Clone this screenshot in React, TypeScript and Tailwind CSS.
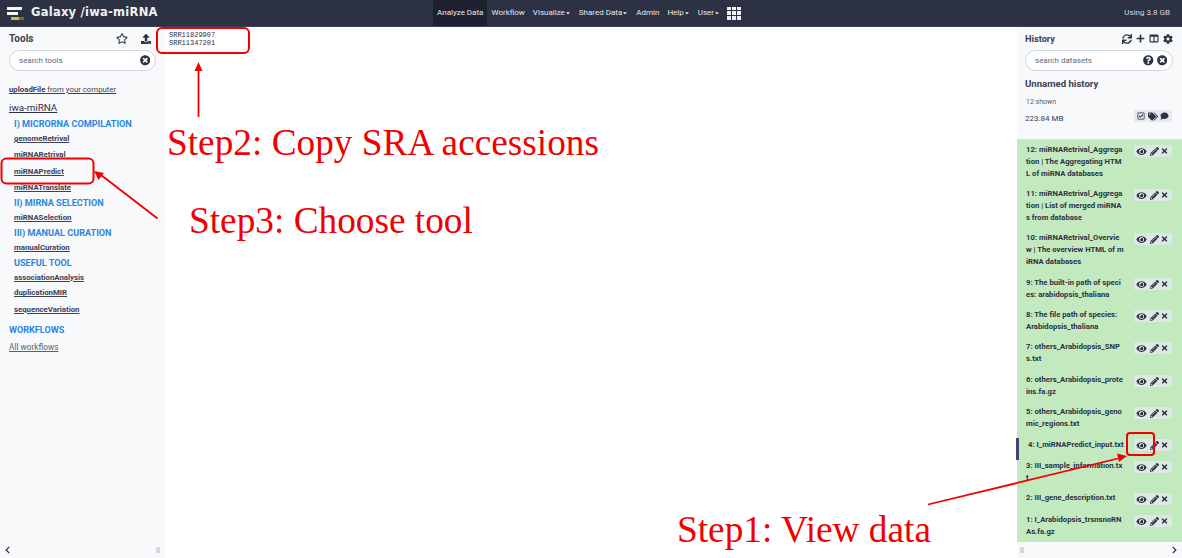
import React from "react";
import {
  FaEye, FaPencilAlt, FaTimes, FaSync, FaPlus, FaColumns, FaCog, FaRegStar, FaUpload,
  FaTimesCircle, FaQuestionCircle, FaRegCheckSquare, FaTags, FaComment, FaChevronLeft, FaChevronRight, FaCaretDown,
} from "react-icons/fa";

const nav = [
  { t: "Analyze Data", active: true },
  { t: "Workflow" },
  { t: "Visualize", c: true },
  { t: "Shared Data", c: true },
  { t: "Admin" },
  { t: "Help", c: true },
  { t: "User", c: true },
];

const tools = [
  { t: "genomeRetrival", c: "h-[16px]", kind: "tool" },
  { t: "miRNARetrival", c: "h-[16px]", kind: "tool" },
  { t: "miRNAPredict", c: "h-[17px]", kind: "tool" },
  { t: "miRNATranslate", c: "h-[15px]", kind: "tool" },
  { t: "II) MIRNA SELECTION", c: "h-[15px]", kind: "head" },
  { t: "miRNASelection", c: "h-[15px]", kind: "tool" },
  { t: "III) MANUAL CURATION", c: "h-[15px]", kind: "head" },
  { t: "manualCuration", c: "h-[15px]", kind: "tool" },
  { t: "USEFUL TOOL", c: "h-[15px]", kind: "head" },
  { t: "associationAnalysis", c: "h-[15px]", kind: "tool" },
  { t: "duplicationMIR", c: "h-[16px]", kind: "tool" },
  { t: "sequenceVariation", c: "h-[17px]", kind: "tool" },
];

const rows = [
  { l: ["12: miRNARetrival_Aggrega", "tion | The Aggregating HTM", "L of miRNA databases"], p: "pb-[8px]" },
  { l: ["11: miRNARetrival_Aggrega", "tion | List of merged miRNA", "s from database"], p: "pb-[8px]" },
  { l: ["10: miRNARetrival_Overvie", "w | The overview HTML of m", "iRNA databases"], p: "pb-[9px]" },
  { l: ["9: The built-in path of speci", "es: arabidopsis_thaliana"], p: "pb-[8px]" },
  { l: ["8: The file path of species:", "Arabidopsis_thaliana"], p: "pb-[8px]" },
  { l: ["7: others_Arabidopsis_SNP", "s.txt"], p: "pb-[9px]" },
  { l: ["6: others_Arabidopsis_prote", "ins.fa.gz"], p: "pb-[8px]" },
  { l: ["5: others_Arabidopsis_geno", "mic_regions.txt"], p: "pb-[8px]" },
  { l: ["4: I_miRNAPredict_input.txt"], p: "pb-0", cur: true },
  { l: ["3: III_sample_information.tx", "t"], p: "pb-[8px]" },
  { l: ["2: III_gene_description.txt"], p: "pb-0" },
  { l: ["1: I_Arabidopsis_trsnsnoRN", "As.fa.gz"], p: "pb-0" },
];

function Logo() {
  return (
    <svg width="17" height="15" viewBox="0 0 17 15" className="shrink-0">
      <rect x="0" y="1" width="15" height="3" fill="#f4f5f7" />
      <rect x="0" y="6" width="11" height="3" fill="#f4f5f7" />
      <rect x="4" y="11" width="8" height="3" fill="#d8b92e" />
      <rect x="12" y="11" width="5" height="3" fill="#6b6a3c" />
    </svg>
  );
}

function Search({ text, help }: { text: string; help?: boolean }) {
  return (
    <div className="h-[21px] rounded-full bg-white border border-[#cfd6e2] flex items-center pl-[9px] pr-[5px]">
      <span className="flex-1 text-[8px] text-[#5f6678]">{text}</span>
      {help && <FaQuestionCircle className="w-[10.5px] h-[10.5px] text-[#2c3143] mr-[3px]" />}
      <FaTimesCircle className="w-[10.5px] h-[10.5px] text-[#2c3143]" />
    </div>
  );
}

function ToolLink({ t, c }: { t: string; c: string }) {
  return (
    <div className={`${c} flex items-center pl-[14px]`}>
      <span className="text-[7.800px] font-bold text-[#3c4254] underline leading-none">{t}</span>
    </div>
  );
}

function Annotations() {
  return (
    <>
      <svg className="absolute left-0 top-0 pointer-events-none" width="1182" height="558" viewBox="0 0 1182 558">
        <g fill="none" stroke="#f00000" strokeWidth="2">
          <rect x="157" y="28" width="92" height="25" rx="5" />
          <rect x="1.5" y="158.5" width="92" height="25" rx="5" />
          <rect x="1127" y="433" width="27" height="22" rx="3" />
          <line x1="198.500" y1="117" x2="198.500" y2="68" strokeWidth="1.800" />
          <line x1="157.500" y1="218.500" x2="101" y2="175" strokeWidth="1.800" />
          <line x1="928" y1="504.500" x2="1118" y2="458.500" strokeWidth="1.800" />
        </g>
        <g fill="#f00000">
          <polygon points="198.500,62 194.500,71 202.500,71" />
          <polygon points="94,171 104,173 98.500,180" />
          <polygon points="1127,456 1117,453.500 1119,462" />
        </g>
      </svg>
      <span className="absolute left-[167px] top-[122px] text-[37.300px] leading-[41px] text-[#f00000] whitespace-nowrap font-['Liberation_Serif',serif]">
        Step2: Copy SRA accessions
      </span>
      <span className="absolute left-[189px] top-[200px] text-[37.300px] leading-[41px] text-[#f00000] whitespace-nowrap font-['Liberation_Serif',serif]">
        Step3: Choose tool
      </span>
      <span className="absolute left-[677px] top-[509px] text-[37.300px] leading-[41px] text-[#f00000] whitespace-nowrap font-['Liberation_Serif',serif]">
        Step1: View data
      </span>
    </>
  );
}

export default function App() {
  return (
    <div className="relative w-[1182px] h-[558px] overflow-hidden bg-white flex flex-col font-['Roboto',sans-serif] text-[#2c3143]">
      <header className="h-[27px] shrink-0 bg-[#2c3143] border-b border-[#3b4156] flex items-center text-[#e6e8ee]">
        <div className="w-[433px] shrink-0 flex items-center pl-[7px] gap-[7px]">
          <Logo />
          <span className="text-[11.500px] font-bold tracking-[0.25px] text-[#f0f1f4] font-['DejaVu_Sans',sans-serif]">Galaxy /iwa-miRNA</span>
        </div>
        <nav className="flex items-center h-full text-[8px]">
          {nav.map((n) => (
            <div key={n.t} className={`h-full flex items-center px-[4px] ${n.active ? "bg-[#1e2130]" : ""}`}>
              <span>{n.t}</span>
              {n.c && <FaCaretDown className="w-[6px] h-[6px]" />}
            </div>
          ))}
          <div className="ml-[3px] grid grid-cols-3 gap-[1px] w-[14px] h-[13px]">
            {Array.from({ length: 9 }).map((_, i) => (
              <span key={i} className="bg-[#eef0f4]" />
            ))}
          </div>
        </nav>
        <span className="ml-auto mr-[12px] text-[8px] text-[#d5d8e0]">Using 3.8 GB</span>
      </header>

      <div className="flex-1 min-h-0 flex">
        <aside className="w-[165px] shrink-0 bg-[#f8f9fb] flex flex-col">
          <div className="flex items-center h-[23px] pl-[9px] pr-[14px]">
            <span className="flex-1 text-[10px] font-bold text-[#3c4254]">Tools</span>
            <FaRegStar className="w-[12px] h-[11px] mr-[13px]" />
            <FaUpload className="w-[10px] h-[10px]" />
          </div>
          <div className="px-[9px] mt-[0px]">
            <Search text="search tools" />
          </div>
          <div className="mt-[13px] pl-[9px] h-[12px] flex items-center text-[7.800px] text-[#3c4254] underline">
            <b>uploadFile</b>&nbsp;from your computer
          </div>
          <div className="mt-[5px] pl-[9px] h-[14px] flex items-center text-[9.800px] text-[#2c3143] underline">iwa-miRNA</div>
          <div className="mt-[2px] pt-[2px] h-[14px] pl-[14px] flex items-center text-[9.100px] font-bold text-[#2c85e0]">I) MICRORNA COMPILATION</div>
          <div className="flex flex-col">
            {tools.map((x) =>
              x.kind === "head" ? (
                <div key={x.t} className={`${x.c} pt-[2px] pl-[14px] flex items-center text-[9.100px] font-bold text-[#2c85e0]`}>{x.t}</div>
              ) : (
                <ToolLink key={x.t} t={x.t} c={x.c} />
              )
            )}
          </div>
          <div className="mt-[4px] h-[17px] pl-[9px] flex items-center text-[9.100px] font-bold text-[#2c85e0]">WORKFLOWS</div>
          <div className="mt-[2px] pl-[9px] text-[8.300px] text-[#5a6072] underline">All workflows</div>
          <div className="mt-auto h-[16px] flex items-center justify-between pl-[4px] pr-[5px]">
            <FaChevronLeft className="w-[7px] h-[8px]" />
            <span className="w-[4px] h-[6px] bg-[#d4d7dd]" />
          </div>
        </aside>

        <main className="flex-1 min-w-0 pt-[4px] pl-[4px]">
          <pre className="text-[7px] leading-[8.300px] text-[#2c3143] font-['Liberation_Mono',monospace]">{"SRR11829907\nSRR11347201"}</pre>
        </main>

        <aside className="w-[165px] shrink-0 bg-[#f8f9fb] flex flex-col">
          <div className="flex items-center h-[23px] pl-[8px] pr-[9px]">
            <span className="flex-1 text-[9.200px] font-bold text-[#3c4254]">History</span>
            <div className="flex items-center gap-[4px]">
              <FaSync className="w-[10px] h-[10px]" />
              <FaPlus className="w-[9px] h-[9px]" />
              <FaColumns className="w-[10px] h-[9px]" />
              <FaCog className="w-[10px] h-[10px]" />
            </div>
          </div>
          <div className="pl-[8px] pr-[9px]">
            <Search text="search datasets" help />
          </div>
          <div className="mt-[6px] pl-[8px] h-[14px] flex items-center text-[9.600px] font-bold text-[#3c4254]">Unnamed history</div>
          <div className="mt-[6px] pl-[9px] text-[7px] h-[11px] text-[#5a6072]">12 shown</div>
          <div className="mt-[2px] pl-[8px] pr-[10px] h-[16px] flex justify-between">
            <span className="text-[8px] text-[#3c4254] leading-[18px]">223.84 MB</span>
            <div className="h-[12px] w-[38px] rounded-[2px] bg-[#e6e9ee] flex items-center justify-between px-[3px]">
              <FaRegCheckSquare className="w-[8px] h-[8px]" />
              <FaTags className="w-[10px] h-[9px]" />
              <FaComment className="w-[9px] h-[8px]" />
            </div>
          </div>
          <div className="mt-[13px] border-t border-[#dfe2e8] bg-[#c3e9bf] flex-1 min-h-0 pt-[4px] relative">
            {rows.map((r, i) => (
              <div key={i} className={`relative min-h-[22px] flex items-start pl-[9px] pr-[10px] ${r.p}`}>
                {r.cur && <span className="absolute -left-[1px] top-0 w-[3px] h-[22px] bg-[#40466a]" />}
                <div className={`flex-1 text-[7.700px] leading-[12px] font-bold text-[#2c3143] whitespace-nowrap ${r.cur ? "pl-[2px] pt-[1px]" : ""}`}>
                  {r.l.map((s) => (
                    <div key={s}>{s}</div>
                  ))}
                </div>
                <div className="mt-[1px] h-[12px] w-[38px] shrink-0 rounded-[2px] bg-[#e6e9ee]/80 flex items-center justify-between px-[2px] text-[#2c3143]">
                  <FaEye className="w-[11px] h-[9px]" />
                  <FaPencilAlt className="w-[9px] h-[9px]" />
                  <FaTimes className="w-[7px] h-[8px] mr-[2px]" />
                </div>
              </div>
            ))}
          </div>
          <div className="h-[16px] shrink-0 flex items-center justify-between pl-[3px] pr-[4px]">
            <span className="w-[4px] h-[6px] bg-[#d4d7dd]" />
            <FaChevronRight className="w-[7px] h-[8px]" />
          </div>
        </aside>
      </div>

      <Annotations />
    </div>
  );
}
